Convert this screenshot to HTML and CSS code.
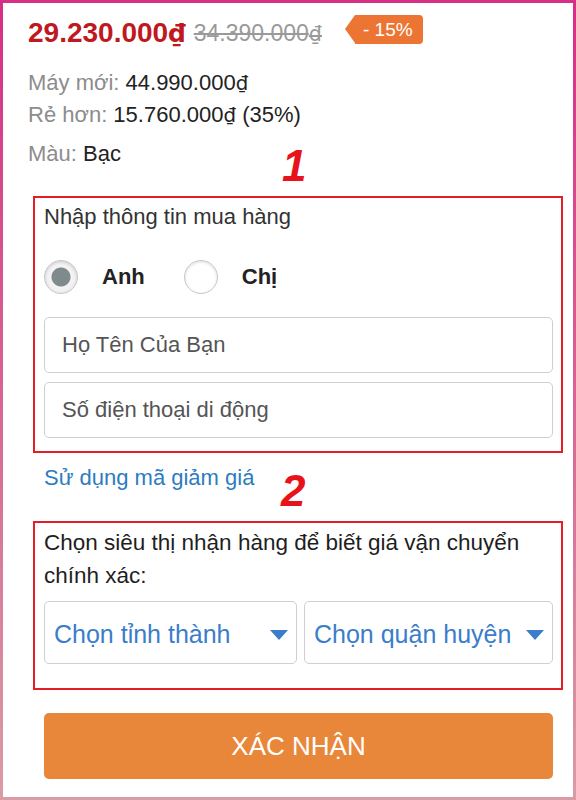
FILE: index.html
```html
<!DOCTYPE html>
<html lang="vi">
<head>
    <meta charset="UTF-8">
    <meta name="viewport" content="width=device-width, initial-scale=1.0">
    <title>Nhập thông tin mua hàng</title>
    <link rel="stylesheet" href="styles.css">
</head>
<body>

    <div class="frame">
        <div class="page">
            <!-- Price summary -->
            <div class="summary">
                <div class="price-row">
                    <span class="price">29.230.000<span class="dong">₫</span></span>
                    <span class="old-price">34.390.000<span class="dong">₫</span></span>
                    <span class="badge">- 15%</span>
                </div>
                <p class="info first"><span class="label">Máy mới:</span> 44.990.000<span class="dong">₫</span></p>
                <p class="info"><span class="label">Rẻ hơn:</span> 15.760.000<span class="dong">₫</span> (35%)</p>
                <p class="info color"><span class="label">Màu:</span> Bạc</p>
            </div>

            <span class="step step-1">1</span>

            <!-- Buyer info -->
            <div class="box buyer">
                <p class="box-title">Nhập thông tin mua hàng</p>
                <div class="radios">
                    <label class="radio checked"><span class="dot"></span>Anh</label>
                    <label class="radio"><span class="dot"></span>Chị</label>
                </div>
                <input class="field" type="text" placeholder="Họ Tên Của Bạn">
                <input class="field" type="text" placeholder="Số điện thoại di động">
            </div>

            <a class="coupon" href="#">Sử dụng mã giảm giá</a>

            <span class="step step-2">2</span>

            <!-- Store / shipping -->
            <div class="box store">
                <p class="store-text">Chọn siêu thị nhận hàng để biết giá vận chuyển chính xác:</p>
                <div class="selects">
                    <div class="select">
                        <span>Chọn tỉnh thành</span>
                        <svg width="18" height="10" viewBox="0 0 18 10"><path d="M0 0 H18 L9 10 Z" fill="#3a7dcb"/></svg>
                    </div>
                    <div class="select">
                        <span>Chọn quận huyện</span>
                        <svg width="18" height="10" viewBox="0 0 18 10"><path d="M0 0 H18 L9 10 Z" fill="#3a7dcb"/></svg>
                    </div>
                </div>
            </div>

            <button class="submit">XÁC NHẬN</button>
        </div>
    </div>

</body>
</html>
```

FILE: styles.css
```css
* {
    box-sizing: border-box;
}
body {
    margin: 0;
    font-family: "Liberation Sans", Arial, sans-serif;
    color: #222;
}
p {
    margin: 0;
}
.frame {
    width: 576px;
    height: 800px;
    padding: 3px;
    background: linear-gradient(#d62f84, #d99ca4);
}
.page {
    position: relative;
    height: 100%;
    background: #fff;
    padding: 13px 10px 0 30px;
}
.summary {
    margin-left: -5px;
}
.dong {
    font-family: "DejaVu Sans", sans-serif;
    font-size: 0.9em;
    line-height: 1;
}
.price-row {
    display: flex;
    align-items: flex-start;
    height: 34px;
    line-height: 34px;
}
.price {
    font-size: 28px;
    font-weight: bold;
    color: #c0181f;
}
.old-price {
    margin-left: 8px;
    font-size: 23px;
    color: #9a9a9a;
    text-decoration: line-through;
}
.badge {
    position: relative;
    margin: -1px 0 0 33px;
    height: 29px;
    line-height: 29px;
    padding: 0 10px 0 8px;
    background: #ec7533;
    color: #fff;
    font-size: 19px;
    border-radius: 0 4px 4px 0;
}
.badge::before {
    content: "";
    position: absolute;
    left: -10px;
    top: 0;
    border-right: 10px solid #ec7533;
    border-top: 14.5px solid transparent;
    border-bottom: 14.5px solid transparent;
}
.info {
    font-size: 22px;
    line-height: 32px;
    color: #222;
}
.info.first {
    margin-top: 17px;
}
.info.color {
    margin-top: 7px;
}
.label {
    color: #8c8c8c;
}
.step {
    position: absolute;
    font-size: 44px;
    line-height: 44px;
    font-weight: bold;
    font-style: italic;
    color: #e8131a;
}
.step-1 {
    left: 279px;
    top: 141px;
}
.step-2 {
    left: 278px;
    top: 466px;
}
.box {
    border: 2px solid #e41e26;
    padding: 0 8px 0 9px;
}
.buyer {
    margin-top: 26px;
    padding-top: 4px;
    padding-bottom: 13px;
}
.box-title {
    font-size: 22px;
    line-height: 30px;
    color: #333;
}
.radios {
    display: flex;
    margin-top: 28px;
    height: 34px;
}
.radio {
    display: flex;
    align-items: center;
    font-size: 22px;
    font-weight: bold;
    color: #222;
    margin-right: 39px;
}
.dot {
    width: 34px;
    height: 34px;
    border-radius: 50%;
    border: 1px solid #c8c8c8;
    background: #fff;
    box-shadow: inset 0 1px 3px rgba(0, 0, 0, 0.15);
    margin-right: 24px;
}
.radio.checked .dot {
    background: radial-gradient(circle, #7f8a8c 0, #7f8a8c 9px, #f4f4f4 10px, #e8e8e8 100%);
}
.field {
    display: block;
    width: 100%;
    height: 56px;
    margin-top: 23px;
    padding: 0 17px;
    border: 1px solid #cfcfcf;
    border-radius: 5px;
    font-family: inherit;
    font-size: 22px;
    color: #222;
}
.field + .field {
    margin-top: 9px;
}
.field::placeholder {
    color: #555;
}
.coupon {
    display: block;
    margin-top: 10px;
    margin-left: 11px;
    font-size: 22px;
    line-height: 30px;
    color: #2d7cc1;
    text-decoration: none;
}
.store {
    margin-top: 28px;
    padding-top: 3px;
    padding-bottom: 24px;
}
.store-text {
    font-size: 22.5px;
    line-height: 33px;
    color: #1e1e1e;
}
.selects {
    display: grid;
    grid-template-columns: 253px 1fr;
    gap: 7px;
    margin-top: 9px;
}
.select {
    height: 63px;
    display: flex;
    align-items: center;
    justify-content: space-between;
    padding: 4px 8px 0 9px;
    border: 1px solid #cfcfcf;
    border-radius: 5px;
    font-size: 25px;
    color: #3a7dcb;
}
.submit {
    display: block;
    width: 509px;
    height: 66px;
    margin: 23px 0 0 11px;
    border: none;
    border-radius: 5px;
    background: #e8873a;
    color: #fff;
    font-family: inherit;
    font-size: 26px;
}
```
